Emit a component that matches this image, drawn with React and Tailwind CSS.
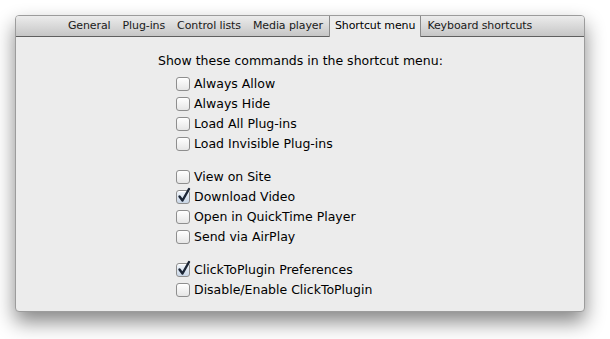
import React from "react";

const font = { fontFamily: '"DejaVu Sans", "Liberation Sans", sans-serif' };

function Box({ checked }) {
  return (
    <span className="relative inline-block w-[14px] h-[14px] shrink-0">
      <span
        className={
          "absolute inset-0 rounded-[3px] border border-[#8e8e8e] shadow-[inset_0_1px_0_#fff] bg-gradient-to-b " +
          (checked ? "from-[#f2f6fb] to-[#c9d6e6]" : "from-[#ffffff] to-[#e6e6e6]")
        }
      />
      {checked && (
        <svg className="absolute left-[1px] top-[-3px]" width="14" height="16" viewBox="0 0 14 16">
          <path d="M2.5 9.5 L5.5 13.5 L12 2" fill="none" stroke="#1c2636" strokeWidth="2.4" strokeLinecap="round" strokeLinejoin="round" />
        </svg>
      )}
    </span>
  );
}

function Item({ label, checked }) {
  return (
    <div className="flex items-center h-[20px] gap-[4px] text-[12.5px] text-black">
      <Box checked={checked} />
      <span>{label}</span>
    </div>
  );
}

const tabs = ["General", "Plug-ins", "Control lists", "Media player", "Shortcut menu", "Keyboard shortcuts"];

export default function App() {
  return (
    <div className="w-[610px] h-[339px] bg-white pt-[15px] pl-[15px]" style={font}>
      <div className="w-[570px] h-[297px] flex flex-col rounded-[4px] border border-[#9c9c9c] bg-[#ececec] shadow-[0_10px_20px_rgba(0,0,0,0.48)] overflow-hidden">
        <div className="h-[21px] shrink-0 flex justify-center bg-gradient-to-b from-[#ececec] to-[#c6c6c6] border-b border-[#5f5f5f]">
          {tabs.map((t) => {
            const sel = t === "Shortcut menu";
            return sel ? (
              <div key={t} className="h-[21px] -mb-px px-[5px] flex items-center border-x border-[#8a8a8a] bg-[#ececec] text-[11px] tracking-[-0.1px] text-black">
                {t}
              </div>
            ) : (
              <div key={t} className="h-[20px] px-[6px] flex items-center text-[11px] tracking-[-0.1px] text-[#1a1a1a]">
                {t}
              </div>
            );
          })}
        </div>
        <div className="flex flex-col items-start pl-[142px] pt-[14px]">
          <div className="h-[20px] flex items-center text-[12.5px] text-black">Show these commands in the shortcut menu:</div>
          <div className="ml-[18px] mt-[3px] flex flex-col">
            <Item label="Always Allow" />
            <Item label="Always Hide" />
            <Item label="Load All Plug-ins" />
            <Item label="Load Invisible Plug-ins" />
          </div>
          <div className="ml-[18px] mt-[13px] flex flex-col">
            <Item label="View on Site" />
            <Item label="Download Video" checked />
            <Item label="Open in QuickTime Player" />
            <Item label="Send via AirPlay" />
          </div>
          <div className="ml-[18px] mt-[13px] flex flex-col">
            <Item label="ClickToPlugin Preferences" checked />
            <Item label="Disable/Enable ClickToPlugin" />
          </div>
        </div>
      </div>
    </div>
  );
}
